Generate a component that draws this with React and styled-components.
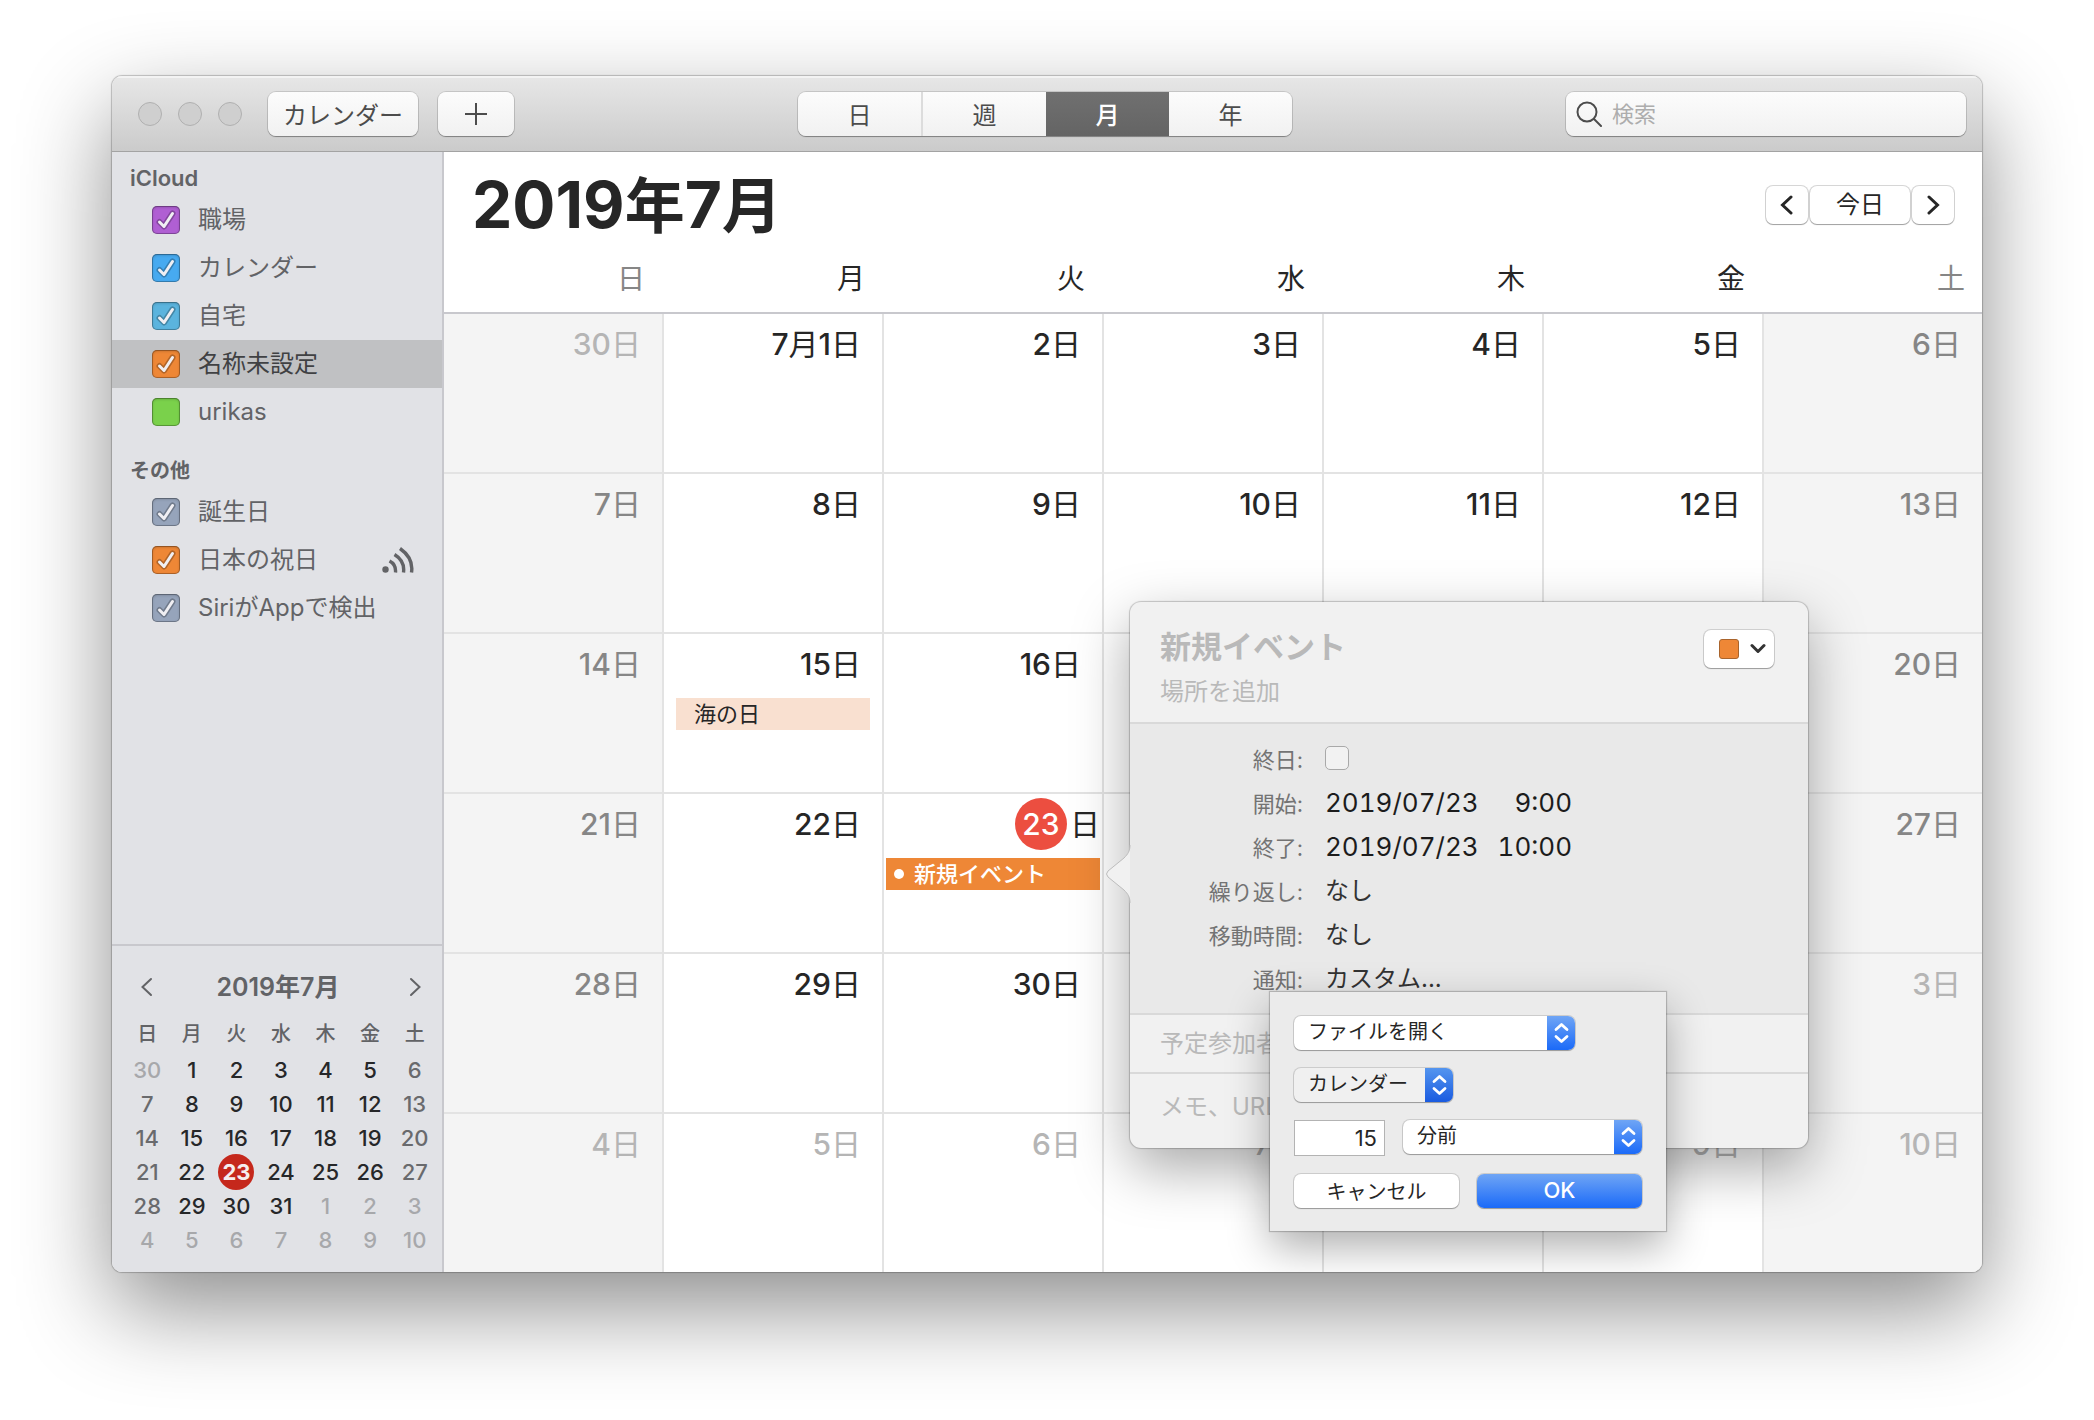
/**
*
* Calendar
*
*/

import React from 'react';
import styled, { createGlobalStyle, css } from 'styled-components';

const GlobalStyle = createGlobalStyle`
    * {
        box-sizing: border-box;
    }

    body {
        margin: 0;
        background: #ffffff;
        font-family: Inter, "Noto Sans CJK JP", sans-serif;
        color: #262626;
    }

    button,
    input,
    select,
    textarea {
        margin: 0;
        padding: 0;
        border: 0;
        background: none;
        color: inherit;
        font: inherit;
    }

    h1,
    h2,
    ul {
        margin: 0;
        padding: 0;
        list-style: none;
    }
`;

const Desktop = styled.div`
    display: flex;
    min-height: 100vh;
    padding: 76px 112px 148px;
`;

const Window = styled.div`
    display: flex;
    flex: 1;
    flex-direction: column;
    min-width: 0;
    overflow: hidden;
    border-radius: 10px;
    background: #ffffff;
    box-shadow: 0 0 1px 1px rgba(0, 0, 0, 0.22), 0 36px 92px rgba(0, 0, 0, 0.45);
`;

/* Toolbar */

const Toolbar = styled.header`
    display: grid;
    grid-template-columns: 1fr auto 1fr;
    align-items: center;
    height: 76px;
    padding: 0 16px 0 12px;
    border-bottom: 1px solid #a3a3a3;
    background: linear-gradient(#e7e7e7, #cbcbcb);
    box-shadow: inset 0 2px 0 #f3f3f3;
`;

const ToolbarGroup = styled.div`
    display: flex;
    align-items: center;
    gap: 20px;
`;

const Lights = styled.div`
    display: flex;
    gap: 16px;
    margin: 0 6px 0 14px;
`;

const Light = styled.button`
    width: 24px;
    height: 24px;
    border: 1px solid #b0b0b0;
    border-radius: 50%;
    background: #cfcfcf;
`;

const raised = css`
    border-radius: 8px;
    background: linear-gradient(#fcfcfc, #f1f1f1);
    box-shadow: 0 0 0 1px rgba(0, 0, 0, 0.12), 0 1px 1px rgba(0, 0, 0, 0.3);
`;

const ToolbarButton = styled.button`
    ${raised}
    display: flex;
    align-items: center;
    justify-content: center;
    width: ${(props) => (props.$wide ? '150px' : '76px')};
    height: 44px;
    color: #4c4c4c;
    font-size: 24px;
`;

const Segments = styled.div`
    ${raised}
    display: flex;
    height: 44px;
`;

const Segment = styled.button`
    width: 123px;
    color: ${(props) => (props.$active ? '#ffffff' : '#4c4c4c')};
    font-size: 24px;
    font-weight: ${(props) => (props.$active ? 500 : 400)};
    background: ${(props) => (props.$active ? 'linear-gradient(#707070, #646464)' : 'none')};

    &:first-child {
        width: 125px;
        border-right: 2px solid #dcdcdc;
    }
`;

const SearchField = styled.label`
    ${raised}
    display: flex;
    justify-self: end;
    align-items: center;
    gap: 10px;
    width: 400px;
    height: 44px;
    padding: 0 10px;
    color: #4c4c4c;

    input {
        flex: 1;
        min-width: 0;
        font-size: 22px;
        outline: none;
    }

    input::placeholder {
        color: #adadad;
    }
`;

/* Sidebar */

const Body = styled.div`
    display: flex;
    flex: 1;
`;

const Sidebar = styled.aside`
    display: flex;
    flex-direction: column;
    width: 332px;
    border-right: 2px solid #c8c8cd;
    background: #e1e2e6;
    color: #626366;
`;

const Sources = styled.nav`
    flex: 1;
`;

const SourceTitle = styled.h2`
    height: ${(props) => (props.$first ? '44px' : '52px')};
    padding: ${(props) => (props.$first ? '12px' : '21px')} 18px 0;
    font-size: ${(props) => (props.$first ? '22px' : '20px')};
    font-weight: 600;
    line-height: 28px;
`;

const SourceRow = styled.li`
    display: flex;
    align-items: center;
    height: 48px;
    padding: 0 28px 0 40px;
    color: ${(props) => (props.$selected ? '#404143' : 'inherit')};
    background: ${(props) => (props.$selected ? '#c0c1c3' : 'none')};

    label {
        display: flex;
        flex: 1;
        align-items: center;
        gap: 18px;
        font-size: 24px;
        line-height: 32px;
    }
`;

const Box = styled.span`
    display: grid;
    width: 28px;
    height: 28px;

    input,
    svg {
        grid-area: 1 / 1;
    }

    input {
        width: 28px;
        height: 28px;
        border-radius: 5px;
        appearance: none;
        background: ${(props) => props.$color};
        box-shadow: inset 0 0 0 1px rgba(0, 0, 0, 0.25), inset 0 1px 3px rgba(0, 0, 0, 0.25);
    }

    svg {
        pointer-events: none;
    }
`;

const MiniCalendar = styled.section`
    padding: 21px 5px 15px 13px;
    border-top: 2px solid #c8c8cd;
`;

const MiniHeader = styled.div`
    display: flex;
    align-items: center;
    justify-content: space-between;
    height: 40px;
    padding: 0 10px;
`;

const MiniTitle = styled.h2`
    padding-right: 6px;
    font-size: 25px;
    font-weight: 600;
    line-height: 32px;
`;

const IconButton = styled.button`
    display: flex;
    align-items: center;
    justify-content: center;
    width: 24px;
    height: 32px;
`;

const MiniTable = styled.table`
    width: 100%;
    margin-top: 8px;
    border-collapse: collapse;
    table-layout: fixed;
    text-align: center;

    th {
        height: 38px;
        padding: 0;
        font-size: 20px;
        font-weight: 500;
        line-height: 28px;
    }
`;

const miniColors = {
    out: '#a7a8ab',
    weekend: '#696a6d',
    day: '#262729',
    today: '#f5eeee',
};

const MiniDay = styled.td`
    height: 34px;
    padding: 0;
    color: ${(props) => miniColors[props.$kind]};
    font-size: 22px;
    font-weight: ${(props) => (props.$kind === 'today' ? 700 : 500)};
    line-height: 34px;

    span {
        display: block;
        width: 36px;
        margin: -1px auto;
        border-radius: 50%;
        background: #c5281c;
        line-height: 36px;
    }
`;

/* Month */

const Main = styled.main`
    display: flex;
    flex: 1;
    flex-direction: column;
    min-width: 0;
`;

const MonthHeader = styled.div`
    display: flex;
    align-items: center;
    justify-content: space-between;
    height: 106px;
    padding: 0 28px;
`;

const MonthTitle = styled.h1`
    font-size: 64px;
    font-weight: 700;
    line-height: 80px;

    span {
        font-size: 60px;
    }
`;

const MonthNav = styled.div`
    display: flex;
    gap: 2px;
`;

const NavButton = styled.button`
    display: flex;
    align-items: center;
    justify-content: center;
    width: ${(props) => (props.$wide ? '100px' : '42px')};
    height: 38px;
    border-radius: 7px;
    background: #ffffff;
    font-size: 24px;
    line-height: 32px;
    box-shadow: 0 0 0 1px rgba(0, 0, 0, 0.16), 0 1px 1px rgba(0, 0, 0, 0.25);
`;

const MonthTable = styled.table`
    display: flex;
    flex: 1;
    flex-direction: column;

    thead,
    tbody {
        display: grid;
        grid-template-columns: repeat(7, minmax(0, 1fr));
        column-gap: 2px;
    }

    thead {
        border-bottom: 2px solid #c8c8cd;
    }

    tbody {
        flex: 1;
        grid-auto-rows: minmax(158px, 1fr);
        row-gap: 2px;
        background: #e3e3e3;
    }

    tr {
        display: contents;
    }
`;

const Weekday = styled.th`
    padding: 0 17px 12px 0;
    color: ${(props) => (props.$weekend ? '#868686' : '#262626')};
    font-size: 28px;
    font-weight: 400;
    line-height: 42px;
    text-align: right;
`;

const dayColors = {
    out: '#b5b5b5',
    weekend: '#868686',
    day: '#262626',
    today: '#262626',
};

const Day = styled.td`
    position: relative;
    padding: 4px 2px;
    color: ${(props) => dayColors[props.$kind]};
    background: ${(props) => (props.$weekend ? '#f4f4f4' : '#ffffff')};
`;

const DayNumber = styled.div`
    height: 54px;
    padding-right: ${(props) => (props.$today ? '0' : '19px')};
    font-size: 30px;
    font-weight: 500;
    line-height: 52px;
    text-align: right;
`;

const Kanji = styled.span`
    font-weight: 400;
`;

const TodayMark = styled.span`
    display: inline-block;
    width: 52px;
    height: 52px;
    margin-right: 3px;
    border-radius: 50%;
    background: #ec4e40;
    color: #ffffff;
    text-align: center;
`;

const Event = styled.div`
    display: flex;
    align-items: center;
    gap: 10px;
    height: 32px;
    margin: ${(props) => (props.$holiday ? '6px 10px 0' : '6px 0 0')};
    padding-left: ${(props) => (props.$holiday ? '18px' : '8px')};
    background: ${(props) => (props.$holiday ? '#f9e0d0' : '#ee8736')};
    color: ${(props) => (props.$holiday ? '#262626' : '#ffffff')};
    font-size: 22px;
    font-weight: ${(props) => (props.$holiday ? 400 : 500)};
    line-height: 30px;
`;

const Dot = styled.span`
    width: 10px;
    height: 10px;
    border-radius: 50%;
    background: #ffffff;
`;

/* Event popover */

const Popover = styled.section`
    position: absolute;
    z-index: 2;
    top: -192px;
    left: calc(100% + 28px);
    width: 678px;
    border-radius: 11px;
    background: #f1f1f1;
    box-shadow: 0 0 1px 1px rgba(0, 0, 0, 0.2), 0 20px 56px rgba(0, 0, 0, 0.34);
    text-align: left;
`;

const Arrow = styled.svg`
    position: absolute;
    top: 242px;
    left: -25px;
`;

const PopoverHead = styled.div`
    display: flex;
    justify-content: space-between;
    height: 120px;
    padding: 23px 34px 0 30px;
`;

const HeadFields = styled.div`
    display: flex;
    flex: 1;
    flex-direction: column;
    gap: 6px;
    min-width: 0;
`;

const Field = styled.input`
    display: block;
    width: 100%;
    height: ${(props) => (props.$title ? '42px' : '36px')};
    font-size: ${(props) => (props.$title ? '31px' : '24px')};
    font-weight: ${(props) => (props.$title ? 700 : 400)};
    outline: none;

    &::placeholder {
        color: #b9b9b9;
    }
`;

const ColorButton = styled.button`
    display: flex;
    align-items: center;
    justify-content: flex-end;
    gap: 11px;
    width: 70px;
    height: 38px;
    margin-top: 5px;
    padding-right: 8px;
    border-radius: 7px;
    background: #ffffff;
    box-shadow: 0 0 0 1px rgba(0, 0, 0, 0.14), 0 1px 1px rgba(0, 0, 0, 0.25);
`;

const Swatch = styled.span`
    width: 20px;
    height: 20px;
    border: 1px solid #a9642c;
    border-radius: 3px;
    background: #ee8736;
`;

const Details = styled.div`
    height: 293px;
    padding: 12px 0 0;
    border: solid #d9d9d9;
    border-width: 2px 0;
    background: #e9e9e9;
`;

const DetailRow = styled.div`
    position: relative;
    display: grid;
    grid-template-columns: 173px 1fr;
    column-gap: 22px;
    align-items: center;
    height: 44px;

    > label {
        color: #737373;
        font-size: 22px;
        text-align: right;
    }

    > select {
        justify-self: start;
        color: #333333;
        font-size: 24px;
        appearance: none;
    }
`;

const AllDay = styled.input`
    width: 24px;
    height: 24px;
    border: 1px solid #a9a9a9;
    border-radius: 5px;
    appearance: none;
    background: #f2f2f2;
`;

const DateTime = styled.div`
    display: flex;
    color: #1c1c1c;
    font-size: 26px;
    font-variant-numeric: tabular-nums;

    input {
        width: 160px;
        outline: none;
    }

    input:last-child {
        width: 87px;
        text-align: right;
    }
`;

const Extra = styled.div`
    display: flex;
    align-items: center;
    height: ${(props) => (props.$last ? '76px' : '57px')};
    padding: 0 30px ${(props) => (props.$last ? '10px' : '0')};
    border-top: ${(props) => (props.$last ? '2px solid #d9d9d9' : '0')};
`;

/* Custom alert sheet */

const Sheet = styled.form`
    position: absolute;
    z-index: 3;
    top: 36px;
    left: 140px;
    display: flex;
    flex-direction: column;
    gap: 18px;
    width: 396px;
    padding: 24px 24px 23px;
    background: #ebebeb;
    box-shadow: 0 0 1px 1px rgba(0, 0, 0, 0.2), 0 16px 40px rgba(0, 0, 0, 0.32);
    font-size: 20px;
`;

const SheetRow = styled.div`
    display: flex;
    gap: 18px;
`;

const PopUp = styled.span`
    position: relative;
    display: flex;
    width: ${(props) => props.$width || 'auto'};
    height: 34px;
    flex: ${(props) => (props.$width ? 'none' : 1)};
    overflow: hidden;
    border-radius: 7px;
    background: ${(props) => (props.$pressed ? '#f0f0f0' : '#ffffff')};
    box-shadow: 0 0 0 1px rgba(0, 0, 0, 0.13), 0 1px 1px rgba(0, 0, 0, 0.25);

    select {
        flex: 1;
        min-width: 0;
        padding: 0 32px 2px 14px;
        appearance: none;
    }

    svg {
        position: absolute;
        top: 0;
        right: 0;
        height: 34px;
        background: ${(props) => (props.$pressed ? 'linear-gradient(#5495ef, #1a5be0)' : 'linear-gradient(#6fa5f5, #1b6af8)')};
        pointer-events: none;
    }
`;

const Amount = styled.input`
    width: 91px;
    height: 36px;
    padding-right: 7px;
    border: 1px solid #b3b3b3;
    background: #ffffff;
    font-size: 22px;
    text-align: right;
    outline: none;
`;

const SheetButton = styled.button`
    flex: 1;
    height: 34px;
    padding-bottom: 2px;
    border-radius: 7px;
    background: ${(props) => (props.$primary ? 'linear-gradient(#6fa5f5, #1b6af8)' : '#ffffff')};
    box-shadow: 0 0 0 1px rgba(0, 0, 0, 0.13), 0 1px 1px rgba(0, 0, 0, 0.25);
    color: ${(props) => (props.$primary ? '#ffffff' : 'inherit')};
    font-size: ${(props) => (props.$primary ? '22px' : '20px')};
    font-weight: ${(props) => (props.$primary ? 500 : 400)};
`;

const WEEKDAYS = ['日', '月', '火', '水', '木', '金', '土'];

const WEEKS = [
    [30, 1, 2, 3, 4, 5, 6],
    [7, 8, 9, 10, 11, 12, 13],
    [14, 15, 16, 17, 18, 19, 20],
    [21, 22, 23, 24, 25, 26, 27],
    [28, 29, 30, 31, 1, 2, 3],
    [4, 5, 6, 7, 8, 9, 10],
];

const ICLOUD = [
    { name: '職場', color: '#b05fd3', checked: true },
    { name: 'カレンダー', color: '#47aaf0', checked: true },
    { name: '自宅', color: '#5bb4de', checked: true },
    { name: '名称未設定', color: '#ee8736', checked: true, selected: true },
    { name: 'urikas', color: '#7ad14b', checked: false },
];

const OTHER = [
    { name: '誕生日', color: '#96a4bb', checked: true },
    { name: '日本の祝日', color: '#ee8736', checked: true, shared: true },
    { name: 'SiriがAppで検出', color: '#96a4bb', checked: true },
];

function getKind(week, column, date) {
    if ((week === 0 && date > 7) || (week > 3 && date < 15)) {
        return 'out';
    }
    if (date === 23) {
        return 'today';
    }
    return column === 0 || column === 6 ? 'weekend' : 'day';
}

function Chevron({ right, size = 20, stroke = 2 }) {
    return (
        <svg width={size} height={size} viewBox="0 0 20 20" fill="none" stroke="currentColor" strokeWidth={stroke} strokeLinecap="round" aria-hidden="true">
            <path d={right ? 'M6 2 L14.5 10 L6 18' : 'M14 2 L5.5 10 L14 18'} />
        </svg>
    );
}

function UpDown() {
    return (
        <svg width="28" height="34" viewBox="0 0 28 34" fill="none" stroke="#ffffff" strokeWidth="2.8" strokeLinecap="round" strokeLinejoin="round" aria-hidden="true">
            <path d="M9 13.5 L14.5 8.5 L20 13.5 M9 20.5 L14.5 25.5 L20 20.5" />
        </svg>
    );
}

function SourceList({ items }) {
    return (
        <ul>
            {items.map((item) => (
                <SourceRow key={item.name} $selected={item.selected}>
                    <label>
                        <Box $color={item.color}>
                            <input type="checkbox" defaultChecked={item.checked} />
                            {item.checked && (
                                <svg width="28" height="28" viewBox="0 0 28 28" fill="none" strokeLinecap="round" strokeLinejoin="round" aria-hidden="true">
                                    <path d="M7.5 16 L12 20.5 L20.5 7.5" stroke="rgba(0, 0, 0, 0.25)" strokeWidth="6" />
                                    <path d="M7.5 16 L12 20.5 L20.5 7.5" stroke="#f0eff3" strokeWidth="3" />
                                </svg>
                            )}
                        </Box>
                        {item.name}
                    </label>
                    {item.shared && (
                        <svg width="32" height="26" viewBox="0 0 32 26" fill="none" stroke="currentColor" strokeWidth="3.4" aria-hidden="true">
                            <circle cx="3.5" cy="22.5" r="3.2" fill="currentColor" stroke="none" />
                            <path d="M7.5 14 C11.5 16 14 20 13.5 25.5 M12.5 7.5 C19 11.5 22.5 18 21.5 25.5 M18 1.5 C26.5 7.5 31 16 29.5 25.5" />
                        </svg>
                    )}
                </SourceRow>
            ))}
        </ul>
    );
}

function MiniMonth() {
    return (
        <MiniCalendar>
            <MiniHeader>
                <IconButton aria-label="前の月"><Chevron /></IconButton>
                <MiniTitle>2019年7月</MiniTitle>
                <IconButton aria-label="次の月"><Chevron right /></IconButton>
            </MiniHeader>
            <MiniTable>
                <thead>
                    <tr>{WEEKDAYS.map((name) => <th key={name}>{name}</th>)}</tr>
                </thead>
                <tbody>
                    {WEEKS.map((days, week) => (
                        <tr key={week}>
                            {days.map((date, column) => {
                                const kind = getKind(week, column, date);
                                return (
                                    <MiniDay key={column} $kind={kind}>
                                        {kind === 'today' ? <span>{date}</span> : date}
                                    </MiniDay>
                                );
                            })}
                        </tr>
                    ))}
                </tbody>
            </MiniTable>
        </MiniCalendar>
    );
}

function AlertSheet() {
    return (
        <Sheet onSubmit={(event) => event.preventDefault()}>
            <PopUp $width="281px">
                <select aria-label="動作"><option>ファイルを開く</option></select>
                <UpDown />
            </PopUp>
            <PopUp $width="159px" $pressed>
                <select aria-label="ファイル"><option>カレンダー</option></select>
                <UpDown />
            </PopUp>
            <SheetRow>
                <Amount aria-label="時間" defaultValue="15" />
                <PopUp>
                    <select aria-label="単位"><option>分前</option></select>
                    <UpDown />
                </PopUp>
            </SheetRow>
            <SheetRow>
                <SheetButton type="button">キャンセル</SheetButton>
                <SheetButton type="submit" $primary>OK</SheetButton>
            </SheetRow>
        </Sheet>
    );
}

function EventPopover() {
    return (
        <Popover>
            <PopoverHead>
                <HeadFields>
                    <Field $title placeholder="新規イベント" aria-label="タイトル" />
                    <Field placeholder="場所を追加" aria-label="場所" />
                </HeadFields>
                <ColorButton aria-label="カレンダーの色">
                    <Swatch />
                    <svg width="16" height="12" viewBox="0 0 16 12" fill="none" stroke="#333333" strokeWidth="3" strokeLinecap="round" strokeLinejoin="round" aria-hidden="true">
                        <path d="M2 2.5 L8 8.5 L14 2.5" />
                    </svg>
                </ColorButton>
            </PopoverHead>
            <Details>
                <DetailRow>
                    <label htmlFor="all-day">終日:</label>
                    <AllDay id="all-day" type="checkbox" />
                </DetailRow>
                <DetailRow>
                    <label htmlFor="start">開始:</label>
                    <DateTime>
                        <input id="start" defaultValue="2019/07/23" />
                        <input aria-label="開始時刻" defaultValue="9:00" />
                    </DateTime>
                </DetailRow>
                <DetailRow>
                    <label htmlFor="end">終了:</label>
                    <DateTime>
                        <input id="end" defaultValue="2019/07/23" />
                        <input aria-label="終了時刻" defaultValue="10:00" />
                    </DateTime>
                </DetailRow>
                <DetailRow>
                    <label htmlFor="repeat">繰り返し:</label>
                    <select id="repeat"><option>なし</option></select>
                </DetailRow>
                <DetailRow>
                    <label htmlFor="travel">移動時間:</label>
                    <select id="travel"><option>なし</option></select>
                </DetailRow>
                <DetailRow>
                    <label htmlFor="alert">通知:</label>
                    <select id="alert"><option>カスタム...</option></select>
                    <AlertSheet />
                </DetailRow>
            </Details>
            <Extra>
                <Field placeholder="予定参加者を追加" aria-label="予定参加者" />
            </Extra>
            <Extra $last>
                <Field placeholder="メモ、URLを追加" aria-label="メモ" />
            </Extra>
            <Arrow width="27" height="60" viewBox="0 0 27 60" fill="#f1f1f1" stroke="#bdbdbd" strokeWidth="1" aria-hidden="true">
                <path d="M25 1 C25 7 23 10 19 14 L3 27 Q0 30 3 33 L19 46 C23 50 25 53 25 59" />
            </Arrow>
        </Popover>
    );
}

function MonthDay({ date, kind, weekend, first }) {
    const today = kind === 'today';

    return (
        <Day $kind={kind} $weekend={weekend}>
            <DayNumber $today={today}>
                {first && <>7<Kanji>月</Kanji></>}
                {today ? <TodayMark>{date}</TodayMark> : date}
                <Kanji>日</Kanji>
            </DayNumber>
            {date === 15 && <Event $holiday>海の日</Event>}
            {today && <Event><Dot />新規イベント</Event>}
            {today && <EventPopover />}
        </Day>
    );
}

function Month() {
    return (
        <MonthTable>
            <thead>
                <tr>
                    {WEEKDAYS.map((name, column) => (
                        <Weekday key={name} $weekend={column === 0 || column === 6}>{name}</Weekday>
                    ))}
                </tr>
            </thead>
            <tbody>
                {WEEKS.map((days, week) => (
                    <tr key={week}>
                        {days.map((date, column) => (
                            <MonthDay
                                key={column}
                                date={date}
                                kind={getKind(week, column, date)}
                                weekend={column === 0 || column === 6}
                                first={week === 0 && date === 1}
                            />
                        ))}
                    </tr>
                ))}
            </tbody>
        </MonthTable>
    );
}

function App() {
    return (
        <Desktop>
            <GlobalStyle />
            <Window>
                <Toolbar>
                    <ToolbarGroup>
                        <Lights>
                            <Light aria-label="閉じる" />
                            <Light aria-label="しまう" />
                            <Light aria-label="拡大" />
                        </Lights>
                        <ToolbarButton $wide>カレンダー</ToolbarButton>
                        <ToolbarButton aria-label="追加">
                            <svg width="22" height="22" viewBox="0 0 22 22" stroke="currentColor" strokeWidth="2" aria-hidden="true">
                                <path d="M11 0 V22 M0 11 H22" />
                            </svg>
                        </ToolbarButton>
                    </ToolbarGroup>
                    <Segments>
                        <Segment>日</Segment>
                        <Segment>週</Segment>
                        <Segment $active>月</Segment>
                        <Segment>年</Segment>
                    </Segments>
                    <SearchField>
                        <svg width="26" height="26" viewBox="0 0 26 26" fill="none" stroke="currentColor" strokeWidth="2" strokeLinecap="round" aria-hidden="true">
                            <circle cx="11" cy="11" r="9.5" />
                            <path d="M18 18 L25 25" />
                        </svg>
                        <input type="search" placeholder="検索" aria-label="検索" />
                    </SearchField>
                </Toolbar>
                <Body>
                    <Sidebar>
                        <Sources>
                            <SourceTitle $first>iCloud</SourceTitle>
                            <SourceList items={ICLOUD} />
                            <SourceTitle>その他</SourceTitle>
                            <SourceList items={OTHER} />
                        </Sources>
                        <MiniMonth />
                    </Sidebar>
                    <Main>
                        <MonthHeader>
                            <MonthTitle>2019<span>年</span>7<span>月</span></MonthTitle>
                            <MonthNav>
                                <NavButton aria-label="前の月"><Chevron stroke={3} /></NavButton>
                                <NavButton $wide>今日</NavButton>
                                <NavButton aria-label="次の月"><Chevron right stroke={3} /></NavButton>
                            </MonthNav>
                        </MonthHeader>
                        <Month />
                    </Main>
                </Body>
            </Window>
        </Desktop>
    );
}

export default App;
